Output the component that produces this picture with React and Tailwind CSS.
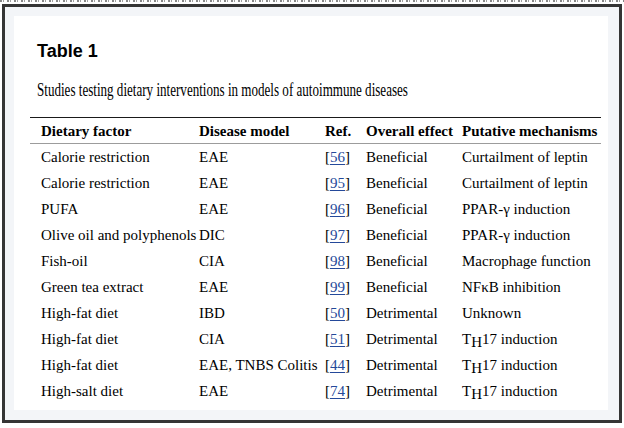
/* Table 1 — dietary interventions in autoimmune disease models (figure capture). */

const ROWS = [
  { factor: "Calorie restriction", model: "EAE", ref: "56", effect: "Beneficial", mech: "Curtailment of leptin" },
  { factor: "Calorie restriction", model: "EAE", ref: "95", effect: "Beneficial", mech: "Curtailment of leptin" },
  { factor: "PUFA", model: "EAE", ref: "96", effect: "Beneficial", mech: "PPAR-γ induction" },
  { factor: "Olive oil and polyphenols", model: "DIC", ref: "97", effect: "Beneficial", mech: "PPAR-γ induction" },
  { factor: "Fish-oil", model: "CIA", ref: "98", effect: "Beneficial", mech: "Macrophage function" },
  { factor: "Green tea extract", model: "EAE", ref: "99", effect: "Beneficial", mech: "NFκB inhibition" },
  { factor: "High-fat diet", model: "IBD", ref: "50", effect: "Detrimental", mech: "Unknown" },
  { factor: "High-fat diet", model: "CIA", ref: "51", effect: "Detrimental", mech: "th17" },
  { factor: "High-fat diet", model: "EAE, TNBS Colitis", ref: "44", effect: "Detrimental", mech: "th17" },
  { factor: "High-salt diet", model: "EAE", ref: "74", effect: "Detrimental", mech: "th17" },
];

// 열 위치는 원본 실측(41 / 199 / 325 / 366 / 462px)에 맞춘 고정 폭
const COLS = "grid grid-cols-[158px_126px_41px_96px_1fr]";

function Mechanism({ value }) {
  if (value !== "th17") return value;
  return (
    <>
      T<span className="align-[-3px]">H</span>17 induction
    </>
  );
}

function Row({ row }) {
  return (
    <div className={`${COLS} h-[26px] leading-[27px] whitespace-nowrap`}>
      <div>{row.factor}</div>
      <div>{row.model}</div>
      <div>
        [<a className="text-[#24499a] underline underline-offset-2">{row.ref}</a>]
      </div>
      <div>{row.effect}</div>
      <div>
        <Mechanism value={row.mech} />
      </div>
    </div>
  );
}

export default function App() {
  return (
    <div className="w-[624px] h-[428px] overflow-hidden bg-white font-['Liberation_Serif',serif] text-black">
      {/* 위쪽에 잘려 나간 본문 줄의 흔적 — 읽을 수 없는 점선 띠로만 남긴다 */}
      <div className="h-[4px]">
        <div className="h-[2px] bg-[repeating-linear-gradient(90deg,#555_0_2px,transparent_2px_3px,#777_3px_4px,transparent_4px_7px)] opacity-70" />
      </div>

      <div className="ml-[2px] h-[419px] w-[620px] border-[3px] border-[#353535] bg-[#f3f5f8] pt-[9px] pr-[11px] pb-[10px] pl-[9px]">
        <div className="h-full bg-white pt-[25px]">
          <h2 className="pl-[23px] font-['Liberation_Sans',sans-serif] text-[18px] font-bold leading-[21px]">
            Table 1
          </h2>

          <p className="mt-[18px] pl-[23px] text-[18px] leading-[20px] whitespace-nowrap">
            <span className="inline-block origin-left scale-x-[0.726]">
              Studies testing dietary interventions in models of autoimmune diseases
            </span>
          </p>

          <div className="mt-[17px] ml-[16px] w-[571px] border-t border-[#1a1a1a] text-[15px]">
            <div className={`${COLS} h-[26px] border-b border-[#9c9c9c] pl-[11px] font-bold leading-[27px] whitespace-nowrap`}>
              <div>Dietary factor</div>
              <div>Disease model</div>
              <div>Ref.</div>
              <div>Overall effect</div>
              <div>Putative mechanisms</div>
            </div>
            <div className="pl-[11px]">
              {ROWS.map((row, i) => (
                <Row key={i} row={row} />
              ))}
            </div>
          </div>
        </div>
      </div>
    </div>
  );
}
